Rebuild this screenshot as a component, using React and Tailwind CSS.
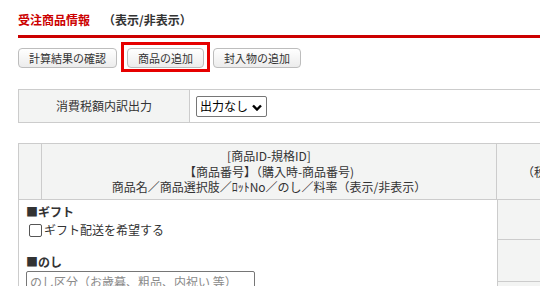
import React from 'react';

const font = { fontFamily: '"Noto Sans CJK JP", "Noto Sans", sans-serif' };

function Btn({ children }) {
    return (
        <button className="block h-[20px] px-[10px] text-[11px] leading-[18px] text-[#333] border border-[#bdbdbd] rounded-[4px] bg-gradient-to-b from-white to-[#ececec]">
            {children}
        </button>
    );
}

export default function App() {
    return (
        <div className="w-[540px] h-[286px] overflow-hidden bg-white text-[#333]" style={font}>
            <div className="pl-[18px] pt-[12px] w-[640px]">
                <div className="flex items-end h-[26px] border-b-[3px] border-[#cc0000] pb-[7px]">
                    <span className="text-[12px] leading-[16px] font-bold text-[#cc0000]">受注商品情報</span>
                    <span className="ml-[13px] text-[12px] leading-[16px] font-bold text-[#333]">（表示/非表示）</span>
                </div>

                <div className="flex items-start mt-[4px]">
                    <div className="flex mt-[6px]">
                        <Btn>計算結果の確認</Btn>
                    </div>
                    <div className="flex ml-[4px] border-[3px] border-[#e60000] px-[3px] pt-[3px] pb-[1px]">
                        <Btn>商品の追加</Btn>
                    </div>
                    <div className="flex ml-[3px] mt-[6px]">
                        <Btn>封入物の追加</Btn>
                    </div>
                </div>

                <div className="flex mt-[17px] h-[34px] border-y border-l border-[#cccccc] text-[12px]">
                    <div className="w-[171px] flex items-center justify-center bg-[#f3f4f3] border-r border-[#cccccc]">
                        消費税額内訳出力
                    </div>
                    <div className="flex items-center pl-[6px]">
                        <div className="relative w-[71px] h-[21px] border border-[#767676] rounded-[2px] bg-white flex items-center pl-[3px] text-[12px] text-black">
                            出力なし
                            <svg className="absolute right-[4px] top-[7px]" width="10" height="7" viewBox="0 0 10 7">
                                <path d="M1 1.5 L5 5.5 L9 1.5" fill="none" stroke="#000" strokeWidth="2.4" />
                            </svg>
                        </div>
                    </div>
                </div>

                <div className="mt-[20px] border border-[#cccccc] text-[12px]">
                    <div className="flex h-[56px] bg-[#f3f4f3] border-b border-[#cccccc]">
                        <div className="w-[23px] border-r border-[#cccccc]"></div>
                        <div className="w-[455px] flex flex-col items-center justify-center leading-[15.5px] border-r border-[#cccccc]">
                            <div>[商品ID-規格ID]</div>
                            <div>【商品番号】（購入時-商品番号)</div>
                            <div>商品名／商品選択肢／ﾛｯﾄNo／のし／料率（表示/非表示）</div>
                        </div>
                        <div className="flex-1 flex items-center pl-[25px] whitespace-nowrap">（税込）単価</div>
                    </div>
                    <div className="flex h-[120px]">
                        <div className="w-[479px] pl-[7px] pt-[3px] border-r border-[#cccccc]">
                            <div className="font-bold leading-[18px]">■ギフト</div>
                            <label className="flex items-center h-[18px]">
                                <span className="ml-[3px] w-[13px] h-[13px] border border-[#555] rounded-[2px] bg-white"></span>
                                <span className="ml-[2px]">ギフト配送を希望する</span>
                            </label>
                            <div className="mt-[14px] font-bold leading-[18px]">■のし</div>
                            <div className="w-[229px] h-[22px] border border-[#767676] rounded-[2px] pl-[3px] flex items-center text-[12px] text-[#8a8a8a]">
                                のし区分（お歳暮、粗品、内祝い 等）
                            </div>
                        </div>
                        <div className="flex-1 flex flex-col bg-[#f3f4f3]">
                            <div className="h-[40px] border-b border-[#cccccc]"></div>
                            <div className="h-[42px] border-b border-[#cccccc]"></div>
                            <div className="flex-1"></div>
                        </div>
                    </div>
                </div>
            </div>
        </div>
    );
}
